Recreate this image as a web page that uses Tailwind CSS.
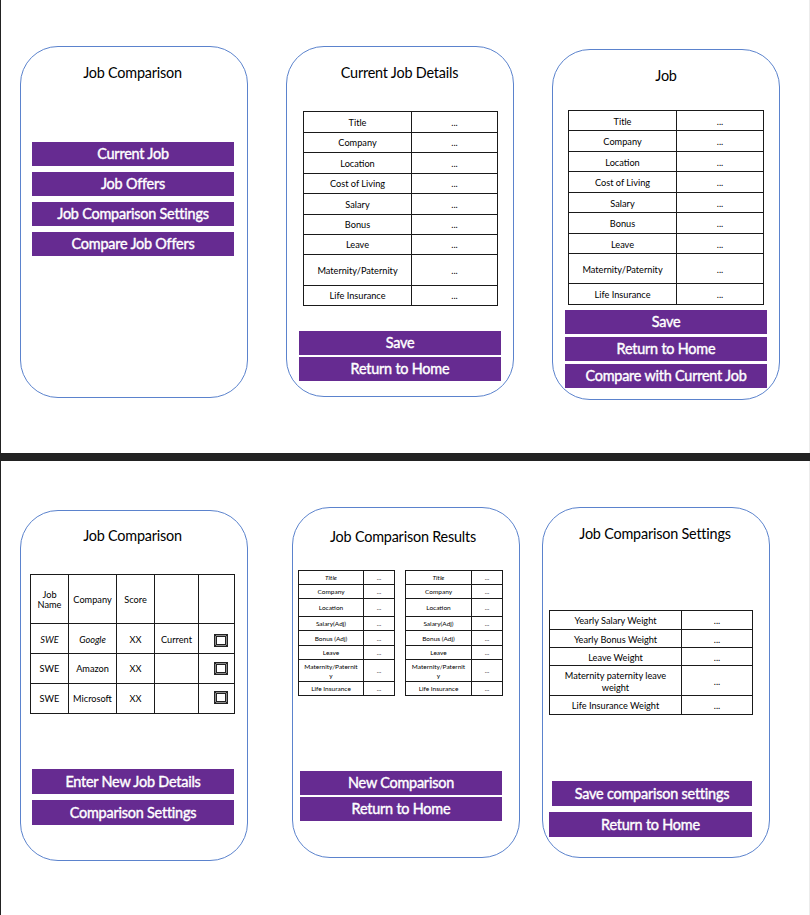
<!DOCTYPE html>
<html lang="en">
<head>
<meta charset="utf-8">
<title>Job Comparison Wireframes</title>
<script src="https://cdn.jsdelivr.net/npm/@tailwindcss/browser@4"></script>
</head>
<body class="w-[810px] h-[915px] overflow-hidden bg-white text-black font-['Lato','Open_Sans',sans-serif]">
<div class="w-full h-full border-l border-[#222] flex flex-col">

  <section class="h-[453px] shrink-0 flex items-start pl-[19px] border-r border-r-[#ececec]">
    <article class="w-[228px] h-[352px] mt-[46px] rounded-[38px] border border-[#5b83cd] shrink-0 flex flex-col">
      <h2 class="mt-[16px] h-5 leading-5 text-[14.4px] tracking-[-0.2px] text-center pr-[3px]">Job Comparison</h2>
      <div class="mt-[59px] ml-[11px] w-[202px] flex flex-col gap-[6px] text-white text-[14.4px] leading-6 tracking-[-0.2px] text-center [-webkit-text-stroke:0.4px_white] [&>*]:h-6 [&>*]:bg-[#662b91]">
        <button>Current Job</button><button>Job Offers</button><button>Job Comparison Settings</button><button>Compare Job Offers</button>
      </div>
    </article>

    <article class="w-[228px] h-[351px] mt-[46px] ml-[38px] rounded-[38px] border border-[#5b83cd] shrink-0 flex flex-col">
      <h2 class="mt-[16px] h-5 leading-5 text-[14.4px] tracking-[-0.2px] text-center pr-px">Current Job Details</h2>
      <div class="mt-[28px] ml-[16px] w-[195px] grid grid-cols-[108px_86px] grid-rows-[21px_20px_21px_20px_21px_20px_20px_31px_20px] border-l border-t border-[#1a1a1a] text-[9.2px] leading-[11px] [&>*]:border-r [&>*]:border-b [&>*]:border-[#1a1a1a] [&>*]:flex [&>*]:items-center [&>*]:justify-center">
        <div>Title</div><div>...</div><div>Company</div><div>...</div><div>Location</div><div>...</div><div>Cost of Living</div><div>...</div><div>Salary</div><div>...</div><div>Bonus</div><div>...</div><div>Leave</div><div>...</div><div>Maternity/Paternity</div><div>...</div><div>Life Insurance</div><div>...</div>
      </div>
      <div class="mt-[25px] ml-[12px] w-[202px] flex flex-col gap-[2px] text-white text-[14.4px] leading-6 tracking-[-0.2px] text-center [-webkit-text-stroke:0.4px_white] [&>*]:h-6 [&>*]:bg-[#662b91]">
        <button>Save</button><button>Return to Home</button>
      </div>
    </article>

    <article class="w-[228px] h-[351px] mt-[49px] ml-[38px] rounded-[38px] border border-[#5b83cd] shrink-0 flex flex-col">
      <h2 class="mt-[16px] h-5 leading-5 text-[14.4px] tracking-[-0.2px] text-center">Job</h2>
      <div class="mt-[24px] ml-[15px] w-[196px] grid grid-cols-[108px_87px] grid-rows-[20px_21px_20px_21px_20px_21px_20px_30px_21px] border-l border-t border-[#1a1a1a] text-[9.2px] leading-[11px] [&>*]:border-r [&>*]:border-b [&>*]:border-[#1a1a1a] [&>*]:flex [&>*]:items-center [&>*]:justify-center [&>*]:pt-px">
        <div>Title</div><div>...</div><div>Company</div><div>...</div><div>Location</div><div>...</div><div>Cost of Living</div><div>...</div><div>Salary</div><div>...</div><div>Bonus</div><div>...</div><div>Leave</div><div>...</div><div>Maternity/Paternity</div><div>...</div><div>Life Insurance</div><div>...</div>
      </div>
      <div class="mt-[5px] ml-[12px] w-[202px] flex flex-col gap-[3px] text-white text-[14.4px] leading-6 tracking-[-0.2px] text-center [-webkit-text-stroke:0.4px_white] [&>*]:h-6 [&>*]:bg-[#662b91]">
        <button>Save</button><button>Return to Home</button><button>Compare with Current Job</button>
      </div>
    </article>
  </section>

  <div class="h-2 shrink-0 bg-[#222]"></div>

  <section class="h-[454px] shrink-0 flex items-start pl-[19px] border-r border-r-[#ececec]">
    <article class="w-[228px] h-[351px] mt-[49px] rounded-[38px] border border-[#5b83cd] shrink-0 flex flex-col">
      <h2 class="mt-[15px] h-5 leading-5 text-[14.4px] tracking-[-0.2px] text-center pr-[3px]">Job Comparison</h2>
      <div class="mt-[28px] ml-[9px] w-[205px] grid grid-cols-[38px_48px_38px_44px_36px] grid-rows-[49px_30px_30px_30px] border-l border-t border-[#1a1a1a] text-[9.2px] leading-[10px] text-center [&>*]:border-r [&>*]:border-b [&>*]:border-[#1a1a1a] [&>*]:flex [&>*]:items-center [&>*]:justify-center">
        <div class="pt-[2px]">Job<br>Name</div><div class="pt-px">Company</div><div class="pt-px">Score</div><div></div><div></div>
        <div class="italic pt-[2px]">SWE</div><div class="italic pt-[2px]">Google</div><div class="pt-[2px]">XX</div><div class="pt-[2px]">Current</div>
        <div class="pl-2 pt-[3px]"><svg width="14" height="13" viewBox="0 0 14 13"><path d="M.5.5H13.5V12.5H.5Z" fill="#8a8a8a" stroke="#222"/><path d="M2.5 2.5H11.5V10.5H2.5Z" fill="#fff" stroke="#222"/><path d="M0 0L3 3M14 0L11 3M0 13L3 10M14 13L11 10" stroke="#222"/></svg></div>
        <div>SWE</div><div>Amazon</div><div>XX</div><div></div>
        <div class="pl-2"><svg width="14" height="13" viewBox="0 0 14 13"><path d="M.5.5H13.5V12.5H.5Z" fill="#8a8a8a" stroke="#222"/><path d="M2.5 2.5H11.5V10.5H2.5Z" fill="#fff" stroke="#222"/><path d="M0 0L3 3M14 0L11 3M0 13L3 10M14 13L11 10" stroke="#222"/></svg></div>
        <div>SWE</div><div>Microsoft</div><div>XX</div><div></div>
        <div class="pl-2 pb-[2px]"><svg width="14" height="13" viewBox="0 0 14 13"><path d="M.5.5H13.5V12.5H.5Z" fill="#8a8a8a" stroke="#222"/><path d="M2.5 2.5H11.5V10.5H2.5Z" fill="#fff" stroke="#222"/><path d="M0 0L3 3M14 0L11 3M0 13L3 10M14 13L11 10" stroke="#222"/></svg></div>
      </div>
      <div class="mt-[55px] ml-[11px] w-[202px] flex flex-col gap-[6px] text-white text-[14.4px] leading-6 tracking-[-0.2px] text-center [-webkit-text-stroke:0.4px_white] [&>*]:h-[25px] [&>*]:bg-[#662b91]">
        <button>Enter New Job Details</button><button>Comparison Settings</button>
      </div>
    </article>

    <article class="w-[228px] h-[351px] mt-[46px] ml-[44px] rounded-[38px] border border-[#5b83cd] shrink-0 flex flex-col">
      <h2 class="mt-[19px] h-5 leading-5 text-[14.4px] tracking-[-0.2px] text-center pr-[6px]">Job Comparison Results</h2>
      <div class="mt-[23px] ml-[5px] flex gap-[10px] text-[6.5px] leading-[9px] text-center">
        <div class="w-[97px] grid grid-cols-[65px_31px] grid-rows-[14px_14px_18px_14px_15px_14px_22px_14px] border-l border-t border-[#1a1a1a] [&>*]:border-r [&>*]:border-b [&>*]:border-[#1a1a1a] [&>*]:flex [&>*]:items-center [&>*]:justify-center">
          <div class="italic">Title</div><div>...</div><div>Company</div><div>...</div><div>Location</div><div>...</div><div>Salary(Adj)</div><div>...</div><div>Bonus (Adj)</div><div>...</div><div>Leave</div><div>...</div><div>Maternity/Paternit<br>y</div><div>...</div><div>Life Insurance</div><div>...</div>
        </div>
        <div class="w-[98px] grid grid-cols-[66px_31px] grid-rows-[14px_14px_18px_14px_15px_14px_22px_14px] border-l border-t border-[#1a1a1a] [&>*]:border-r [&>*]:border-b [&>*]:border-[#1a1a1a] [&>*]:flex [&>*]:items-center [&>*]:justify-center">
          <div class="italic">Title</div><div>...</div><div>Company</div><div>...</div><div>Location</div><div>...</div><div>Salary(Adj)</div><div>...</div><div>Bonus (Adj)</div><div>...</div><div>Leave</div><div>...</div><div>Maternity/Paternit<br>y</div><div>...</div><div>Life Insurance</div><div>...</div>
        </div>
      </div>
      <div class="mt-[75px] ml-[7px] w-[202px] flex flex-col gap-[2px] text-white text-[14.4px] leading-6 tracking-[-0.2px] text-center [-webkit-text-stroke:0.4px_white] [&>*]:h-6 [&>*]:bg-[#662b91]">
        <button>New Comparison</button><button>Return to Home</button>
      </div>
    </article>

    <article class="w-[228px] h-[351px] mt-[46px] ml-[22px] rounded-[38px] border border-[#5b83cd] shrink-0 flex flex-col">
      <h2 class="mt-[16px] h-5 leading-5 text-[14.4px] tracking-[-0.2px] text-center pr-[2px]">Job Comparison Settings</h2>
      <div class="mt-[66px] ml-[6px] w-[204px] grid grid-cols-[132px_71px] grid-rows-[19px_18px_18px_30px_19px] border-l border-t border-[#1a1a1a] text-[9.2px] leading-3 text-center [&>*]:border-r [&>*]:border-b [&>*]:border-[#1a1a1a] [&>*]:flex [&>*]:items-center [&>*]:justify-center [&>*]:pt-[2px]">
        <div>Yearly Salary Weight</div><div>...</div><div>Yearly Bonus Weight</div><div>...</div><div>Leave Weight</div><div>...</div><div>Maternity paternity leave<br>weight</div><div>...</div><div>Life Insurance Weight</div><div>...</div>
      </div>
      <div class="mt-[66px] ml-[6px] w-[203px] flex flex-col gap-[6px] text-white text-[14.4px] leading-[24px] tracking-[-0.2px] text-center [-webkit-text-stroke:0.4px_white] [&>*]:h-[25px] [&>*]:bg-[#662b91]">
        <button class="ml-[3px]">Save comparison settings</button><button class="pt-px">Return to Home</button>
      </div>
    </article>
  </section>
</div>
</body>
</html>
